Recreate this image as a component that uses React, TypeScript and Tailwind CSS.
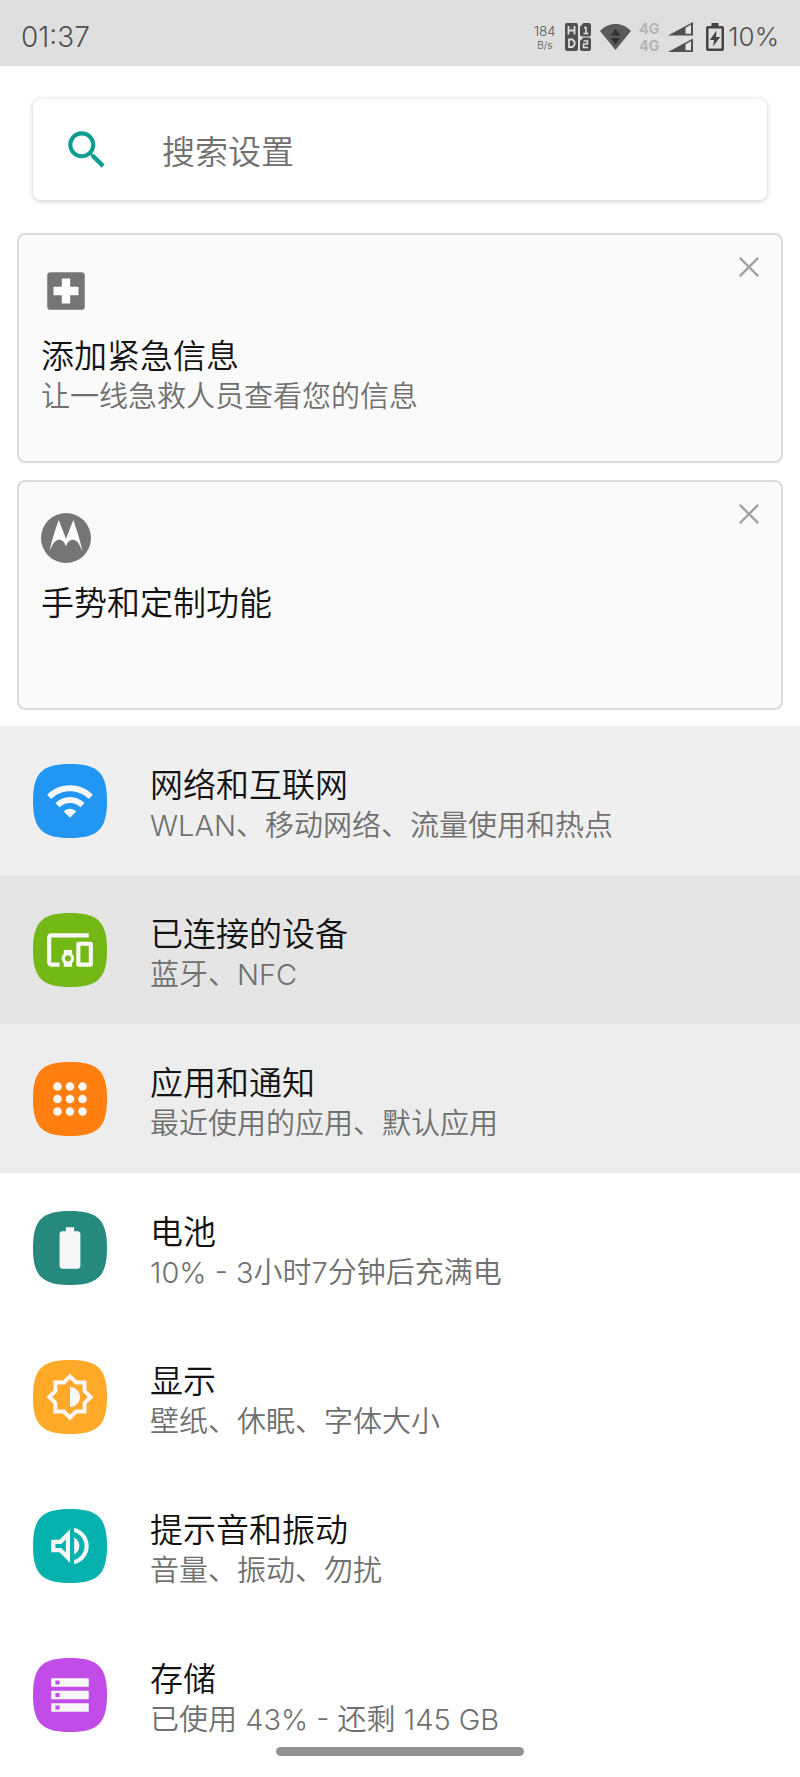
import type { ReactNode } from "react";

type Row = {
  title: string;
  summary: string;
  tile: string;
  row: string;
  icon: ReactNode;
};

const rows: Row[] = [
  {
    title: "网络和互联网",
    summary: "WLAN、移动网络、流量使用和热点",
    tile: "text-[#2196f3]",
    row: "bg-[#efefef]",
    icon: (
      <path d="M1 9l2 2c4.97-4.97 13.03-4.97 18 0l2-2C16.93 2.93 7.08 2.93 1 9zm8 8l3 3 3-3c-1.65-1.66-4.34-1.66-6 0zm-4-4l2 2c2.76-2.76 7.24-2.76 10 0l2-2C15.14 9.14 8.87 9.14 5 13z" />
    ),
  },
  {
    title: "已连接的设备",
    summary: "蓝牙、NFC",
    tile: "text-[#74b816]",
    row: "bg-[#e5e5e5]",
    icon: (
      <path d="M3 6h18V4H3c-1.1 0-2 .9-2 2v12c0 1.1.9 2 2 2h4v-2H3V6zm10 6H9v1.78c-.61.55-1 1.33-1 2.22s.39 1.67 1 2.22V20h4v-1.78c.61-.55 1-1.34 1-2.22s-.39-1.67-1-2.22V12zm-2 5.5c-.83 0-1.5-.67-1.5-1.5s.67-1.5 1.5-1.5 1.5.67 1.5 1.5-.67 1.5-1.5 1.5zM22 8h-6c-.5 0-1 .5-1 1v10c0 .5.5 1 1 1h6c.5 0 1-.5 1-1V9c0-.5-.5-1-1-1zm-1 10h-4v-8h4v8z" />
    ),
  },
  {
    title: "应用和通知",
    summary: "最近使用的应用、默认应用",
    tile: "text-[#ff7f11]",
    row: "bg-[#ededed]",
    icon: (
      <>
        {[6, 12, 18].map((y) =>
          [6, 12, 18].map((x) => <circle key={`${x}-${y}`} cx={x} cy={y} r="2.05" />),
        )}
      </>
    ),
  },
  {
    title: "电池",
    summary: "10% - 3小时7分钟后充满电",
    tile: "text-[#25897d]",
    row: "bg-white",
    icon: (
      <path d="M15.67 4H14V2h-4v2H8.33C7.6 4 7 4.6 7 5.33v15.33C7 21.4 7.6 22 8.33 22h7.33c.74 0 1.34-.6 1.34-1.33V5.33C17 4.6 16.4 4 15.67 4z" />
    ),
  },
  {
    title: "显示",
    summary: "壁纸、休眠、字体大小",
    tile: "text-[#ffa928]",
    row: "bg-white",
    icon: (
      <>
        <path
          d="M12 2.1L14.9 5H19v4.1L21.9 12 19 14.9V19h-4.1L12 21.9 9.1 19H5v-4.1L2.1 12 5 9.1V5h4.1z"
          fill="none"
          stroke="currentColor"
          strokeWidth="1.9"
        />
        <path d="M12 7.2c2.65 0 4.8 2.15 4.8 4.8s-2.15 4.8-4.8 4.8z" />
      </>
    ),
  },
  {
    title: "提示音和振动",
    summary: "音量、振动、勿扰",
    tile: "text-[#06b2ae]",
    row: "bg-white",
    icon: (
      <path d="M3 9v6h4l5 5V4L7 9H3zm7-.17v6.34L7.83 13H5v-2h2.83L10 8.83zM16.5 12c0-1.77-1.02-3.29-2.5-4.03v8.05c1.48-.73 2.5-2.25 2.5-4.02zM14 3.23v2.06c2.89.86 5 3.54 5 6.71s-2.11 5.85-5 6.71v2.06c4.01-.91 7-4.49 7-8.77 0-4.28-2.99-7.86-7-8.77z" />
    ),
  },
  {
    title: "存储",
    summary: "已使用 43% - 还剩 145 GB",
    tile: "text-[#c24ce8]",
    row: "bg-white",
    icon: (
      <path d="M3 20h18v-4H3v4zm2-3h2v2H5v-2zM3 4v4h18V4H3zm4 3H5V5h2v2zm-4 7h18v-4H3v4zm2-3h2v2H5v-2z" />
    ),
  },
];

function StatusBar() {
  return (
    <header className="flex h-[66px] items-center justify-between bg-[#dfdfdf] pt-2 pr-[21px] pl-[21px] text-[#505050]">
      <time className="text-[28px] leading-8">01:37</time>
      <div className="flex items-center">
        <div className="mr-[10px] flex flex-col items-center">
          <span className="text-[13px] leading-4">184</span>
          <span className="text-[10px] leading-[13px]">B/s</span>
        </div>
        <svg className="mr-[9px] h-7 w-[26px]" viewBox="0 0 26 28" fill="none" aria-hidden="true">
          <rect x="0" y="0" width="13" height="28" rx="2" fill="#505050" />
          <path d="M15 3.5L18.5 0H24a2 2 0 0 1 2 2v9.500a2 2 0 0 1-2 2h-7a2 2 0 0 1-2-2z" fill="#505050" />
          <path d="M15 18l3.5-3.5H24a2 2 0 0 1 2 2V26a2 2 0 0 1-2 2h-7a2 2 0 0 1-2-2z" fill="#505050" />
          <path d="M3.500 3v8.500M9.500 3v8.500M3.500 7.500h6M4 16.500v7.500h3.500l2-2v-3.500l-2-2z" stroke="#dfdfdf" strokeWidth="1.800" />
          <path d="M19 4.500h2v6M18.500 10.500h5M18.500 18h4v3h-4v3.500h4.500" stroke="#dfdfdf" strokeWidth="1.500" />
        </svg>
        <svg className="mr-2 h-[26px] w-[31px]" viewBox="0 0 31 26" aria-hidden="true">
          <path d="M0 7C4.200 2.500 9.500 0 15.500 0S26.800 2.500 31 7L15.500 26z" fill="#5a5a5a" />
          <path d="M15.500 5l4.800 6.500h-9.600zM15.500 20.500l4.800-6.500h-9.600z" fill="#303030" />
        </svg>
        <div className="mr-[9px] flex flex-col text-[14px] leading-[17px] font-bold text-[#b4b4b4]">
          <span>4G</span>
          <span>4G</span>
        </div>
        <svg className="mr-[13px] h-[30px] w-[25px]" viewBox="0 0 25 30" aria-hidden="true">
          <path d="M0 13.500L25 0v13.500z" fill="#505050" />
          <path d="M17.500 5.800l5.500-3v9h-5.500z" fill="#e6e6e6" />
          <path d="M0 30L25 16.500V30z" fill="#505050" />
          <path d="M17.500 22.300l5.500-3v9h-5.500z" fill="#e6e6e6" />
        </svg>
        <svg className="mr-1 h-7 w-[18px]" viewBox="0 0 18 28" aria-hidden="true">
          <path
            d="M5.500 0h7v3H16a2 2 0 0 1 2 2v21a2 2 0 0 1-2 2H2a2 2 0 0 1-2-2V5a2 2 0 0 1 2-2h3.500zM2.500 5.500v20h13v-20z"
            fill="#454545"
            fillRule="evenodd"
          />
          <path d="M10.500 7.500L3.800 17H8l-1 6.500L14.200 14H10z" fill="#454545" />
        </svg>
        <span className="text-[26px] leading-8">10%</span>
      </div>
    </header>
  );
}

function SuggestionCard({ icon, title, summary }: { icon: ReactNode; title: string; summary?: string }) {
  return (
    <article className="flex min-h-[230px] items-start justify-between rounded-lg border-2 border-[#dcdcdc] bg-[#fafafa] pt-[31px] pr-[22px] pb-6 pl-[22px]">
      <div>
        <svg className="size-[50px]" viewBox="0 0 24 24" aria-hidden="true">
          {icon}
        </svg>
        <h2 className="mt-[19px] text-[33px] leading-[42px] text-[#121212]">{title}</h2>
        {summary && <p className="text-[29px] leading-10 text-[#707070]">{summary}</p>}
      </div>
      <button type="button" aria-label="关闭" className="-mt-[9px] text-[#a3a3a3]">
        <svg className="size-5" viewBox="0 0 20 20" fill="none" stroke="currentColor" strokeWidth="2.4">
          <path d="M.8.8l18.4 18.4M19.2.8L.8 19.2" />
        </svg>
      </button>
    </article>
  );
}

function SettingsRow({ title, summary, tile, row, icon }: Row) {
  return (
    <li>
      <a href="#" className={`flex min-h-[149px] items-center gap-[43px] px-[33px] ${row}`}>
        <svg className={`size-[74px] shrink-0 ${tile}`} viewBox="0 0 74 74" aria-hidden="true">
          <path d="M37 0C65 0 74 9 74 37S65 74 37 74 0 65 0 37 9 0 37 0z" fill="currentColor" />
          <svg x="12" y="12" width="50" height="50" viewBox="0 0 24 24" className="text-[#f7f7f7]" fill="currentColor">
            {icon}
          </svg>
        </svg>
        <div className="min-w-0 pt-2">
          <h2 className="text-[33px] leading-[42px] text-[#121212]">{title}</h2>
          <p className="text-[29px] leading-10 text-[#707070]">{summary}</p>
        </div>
      </a>
    </li>
  );
}

export default function App() {
  return (
    <div className="relative min-h-screen bg-white pb-2 font-[Inter,'Noto_Sans_CJK_SC',sans-serif] font-[350]">
      <StatusBar />
      <main>
        <div className="px-[33px] py-[33px]">
          <label className="flex h-[101px] items-center rounded-lg bg-white pl-[29px] shadow-[0_1px_5px_rgba(0,0,0,0.22)]">
            <svg className="size-[50px] shrink-0 text-[#0f9d8f]" viewBox="0 0 24 24" fill="currentColor" aria-hidden="true">
              <path d="M15.5 14h-.79l-.28-.27C15.41 12.59 16 11.11 16 9.5 16 5.91 13.09 3 9.5 3S3 5.91 3 9.5 5.91 16 9.5 16c1.61 0 3.09-.59 4.23-1.57l.27.28v.79l5 4.99L20.49 19l-4.99-5zm-6 0C7.01 14 5 11.99 5 9.5S7.01 5 9.5 5 14 7.01 14 9.5 11.99 14 9.5 14z" />
            </svg>
            <input
              type="text"
              aria-label="搜索设置"
              placeholder="搜索设置"
              className="ml-[50px] min-w-0 flex-1 bg-transparent pt-1 text-[33px] leading-[42px] text-[#121212] outline-none placeholder:text-[#707070]"
            />
          </label>
        </div>
        <section className="flex flex-col gap-[17px] px-[17px] pb-4">
          <SuggestionCard
            title="添加紧急信息"
            summary="让一线急救人员查看您的信息"
            icon={
              <>
                <rect x="3" y="3" width="18" height="18" rx="1.6" fill="#757575" />
                <path d="M10 6h4v4h4v4h-4v4h-4v-4H6v-4h4z" fill="#fff" />
              </>
            }
          />
          <SuggestionCard
            title="手势和定制功能"
            icon={
              <>
                <circle cx="12" cy="12" r="12" fill="#757575" />
                <path
                  d="M8.5 3.300L12 12.300l3.500-9C17 7.500 19 13.500 19.800 18.200c-1.200-2.900-2.400-5.400-4.400-5.400-1.700 0-2.700 1.200-3.400 3.200-.7-2-1.700-3.200-3.400-3.200-2 0-3.200 2.500-4.400 5.400C5 13.500 7 7.500 8.500 3.300z"
                  fill="#fff"
                />
              </>
            }
          />
        </section>
        <ul>
          {rows.map((item) => (
            <SettingsRow key={item.title} {...item} />
          ))}
        </ul>
      </main>
      <div className="fixed bottom-[21px] left-1/2 h-[9px] w-[248px] -translate-x-1/2 rounded-full bg-[#929292]" />
    </div>
  );
}
